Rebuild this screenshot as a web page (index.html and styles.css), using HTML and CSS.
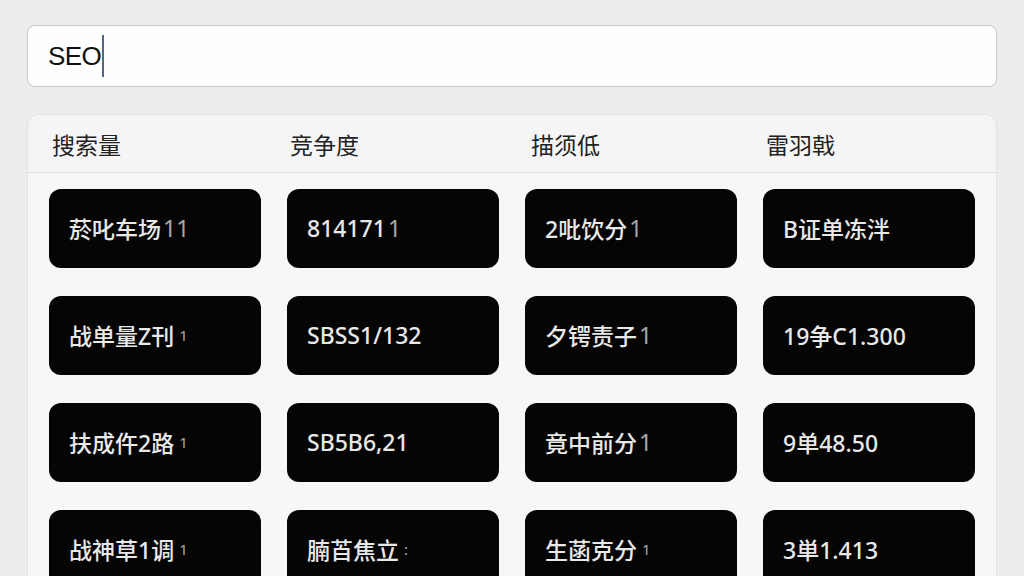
FILE: index.html
```html
<!DOCTYPE html>
<html lang="zh-CN">
<head>
<meta charset="utf-8">
<title>SEO 关键词</title>
<link rel="stylesheet" href="styles.css">
</head>
<body>
<main class="page">
  <div class="search">
    <span class="search-text">SEO</span><span class="caret"></span>
  </div>

  <section class="panel">
    <div class="panel-head">
      <div class="head-cell">搜索量</div>
      <div class="head-cell">竞争度</div>
      <div class="head-cell head-wide">描须低</div>
      <div class="head-cell">雷羽戟</div>
    </div>
    <div class="grid">
      <div class="tile">菸叱车场<span class="dim">11</span></div>
      <div class="tile">814171<span class="dim">1</span></div>
      <div class="tile">2吡饮分<span class="dim">1</span></div>
      <div class="tile">B证单冻泮</div>

      <div class="tile">战单量Z刊<span class="dim small">1</span></div>
      <div class="tile">SBSS1/132</div>
      <div class="tile">夕锷责子<span class="dim">1</span></div>
      <div class="tile">19争C1.300</div>

      <div class="tile">扶成仵2路<span class="dim small">1</span></div>
      <div class="tile">SB5B6,21</div>
      <div class="tile">竟中前分<span class="dim">1</span></div>
      <div class="tile">9单48.50</div>

      <div class="tile">战神草1调<span class="dim small">1</span></div>
      <div class="tile">腩苩焦立<span class="dim small">:</span></div>
      <div class="tile">生菡克分<span class="dim small">1</span></div>
      <div class="tile">3単1.413</div>
    </div>
  </section>
</main>
</body>
</html>
```

FILE: styles.css
```css
html, body {
  margin: 0;
  padding: 0;
  height: 100%;
  overflow: hidden;
  background: #ededef;
}

*, *::before, *::after {
  box-sizing: border-box;
}

.page {
  display: flex;
  flex-direction: column;
  gap: 27px;
  padding: 25px 27px 0 27px;
  font-family: "Noto Sans", "Noto Sans CJK SC", sans-serif;
}

/* search field */
.search {
  display: flex;
  align-items: center;
  height: 62px;
  padding: 0 20px;
  background: #fefefe;
  border: 1px solid #c9c9cb;
  border-radius: 8px;
}

.search-text {
  font-family: "Liberation Sans", Arial, sans-serif;
  font-size: 26px;
  color: #111;
  letter-spacing: -0.6px;
}

.caret {
  width: 2px;
  height: 42px;
  margin-left: 1px;
  background: #55657a;
}

/* results panel */
.panel {
  background: #f7f7f8;
  border: 1px solid #e1e1e4;
  border-radius: 12px;
}

.panel-head {
  display: grid;
  grid-template-columns: repeat(4, 1fr);
  column-gap: 26px;
  align-items: center;
  height: 58px;
  padding: 0 21px;
  border-bottom: 1px solid #dfdfe2;
  background: #f5f5f6;
  border-radius: 12px 12px 0 0;
}

.head-cell {
  padding-left: 3px;
  font-family: "Noto Sans CJK SC", sans-serif;
  font-size: 23px;
  color: #222;
}

.head-wide {
  padding-left: 6px;
}

.grid {
  display: grid;
  grid-template-columns: repeat(4, 1fr);
  column-gap: 26px;
  row-gap: 28px;
  padding: 16px 21px 20px 21px;
}

.tile {
  display: flex;
  align-items: center;
  height: 79px;
  padding: 0 20px 2px 20px;
  background: #050505;
  border-radius: 12px;
  font-family: "Noto Sans", "Noto Sans CJK SC", sans-serif;
  font-size: 23px;
  font-weight: 500;
  color: #e8e8e8;
  white-space: nowrap;
}

.dim {
  color: #a8a8a8;
  margin-left: 2px;
  font-weight: 400;
}

.dim.small {
  font-size: 15px;
  margin-left: 5px;
}
```
